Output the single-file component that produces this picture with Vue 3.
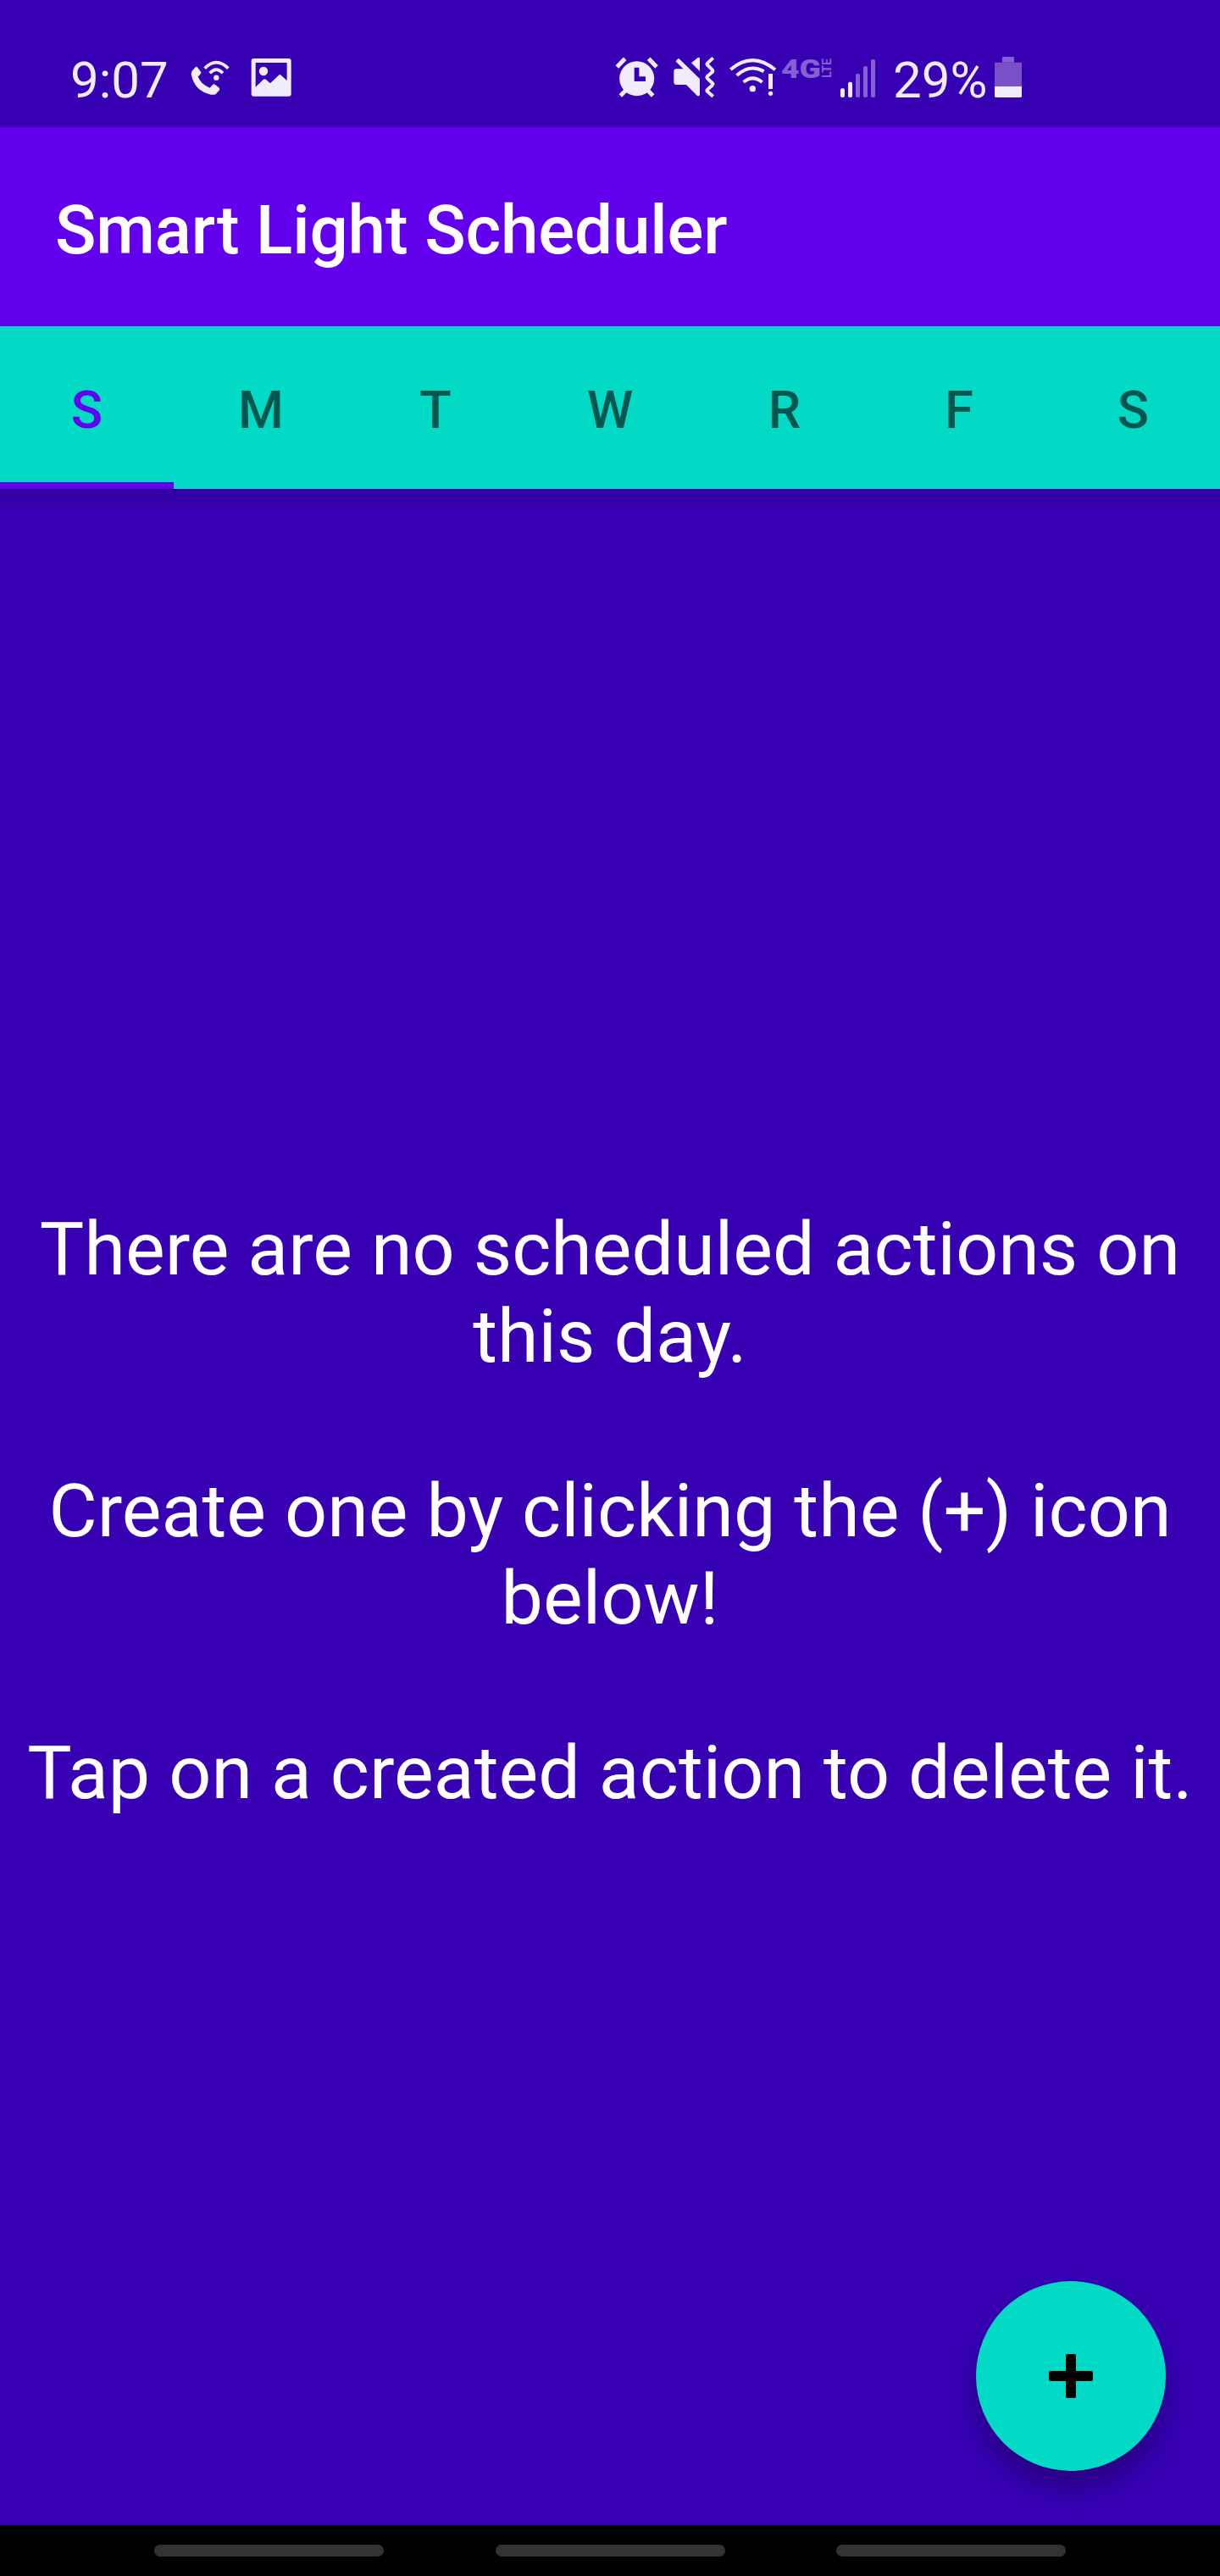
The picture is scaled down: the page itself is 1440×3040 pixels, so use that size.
<script setup>
import { ref } from 'vue'

const days = ['S', 'M', 'T', 'W', 'R', 'F', 'S']
const selected = ref(0)
</script>

<template>
  <div class="screen">
    <header class="status">
      <div class="group">
        <span class="clock">9:07</span>
        <svg class="call" width="48" height="150" viewBox="224 0 48 150">
          <g transform="translate(60 40) scale(.33333)">
            <path class="on" d="M500 131L512 118Q516 114 520 119L532 136Q534 140 521 151Q530 178 563 191L573 180Q577 176 582 180L595 190Q600 195 596 200L585 212Q580 217 566 215Q510 202 498 147Q496 137 500 131Z" />
            <path class="line" stroke-width="11" d="M545 122Q586 80 628 122M563 139Q586 114 609 139" />
            <circle class="on" cx="586" cy="155" r="9.5" />
          </g>
        </svg>
        <svg class="picture" width="48" height="150" viewBox="296 0 48 150">
          <g transform="translate(60 40) scale(.33333)">
            <path class="on" fill-rule="evenodd" d="M719 87H842Q851 87 851 96V212Q851 221 842 221H719Q710 221 710 212V96Q710 87 719 87ZM725 102H836V165L815 146Q811 142 807 146L777 175L762 162Q757 158 752 162L725 188Z" />
            <circle class="on" cx="753" cy="132" r="15.5" />
          </g>
        </svg>
      </div>
      <div class="group">
        <svg width="54" height="150" viewBox="725 0 54 150">
          <g transform="translate(700 40) scale(.33333)">
            <path class="line" stroke-width="15" d="M85 117L113 88M197 88L225 117M97 219L120 196M212 219L190 196" />
            <circle class="on" cx="155" cy="158" r="61.5" />
            <path class="cut" d="M146 119H163V151H186V168H146Z" />
          </g>
        </svg>
        <svg class="mute" width="52" height="150" viewBox="794 0 52 150">
          <g transform="translate(700 40) scale(.33333)">
            <path class="on" d="M286 133Q286 124 295 124H319L292 97L303 86L378 159V215Q376 223 369 219L330 180H295Q286 180 286 171Z" />
            <path class="on" d="M348 103L371 84Q378 81 378 88V132Z" />
            <path class="line zig" stroke-width="12" d="M425 85L405 104Q402 107 405 110L422 127Q426 131 422 135L405 150Q402 154 405 158L422 174Q426 178 422 182L405 197Q402 201 405 204L425 221" />
          </g>
        </svg>
        <svg class="wifi" width="58" height="150" viewBox="860 0 58 150">
          <g transform="translate(700 40) scale(.33333)">
            <path class="line" stroke-width="12" d="M487 126Q565 60 645 127M509 147Q556 104 605 133M533 171Q565 143 599 171" />
            <circle class="on" cx="565" cy="194" r="11" />
            <path class="on" d="M621 141H636V195H621Z" />
            <circle class="on" cx="628.500" cy="211" r="8" />
          </g>
        </svg>
        <svg class="network" width="68" height="150" viewBox="921 0 68 150">
          <text class="dim gen" x="922" y="92" textLength="47" lengthAdjust="spacingAndGlyphs">4G</text>
          <text class="dim lte" transform="translate(981 92) rotate(-90)" textLength="23" lengthAdjust="spacingAndGlyphs">LTE</text>
        </svg>
        <svg class="signal" width="43" height="150" viewBox="991 0 43 150">
          <g transform="translate(960 40) scale(.33333)">
            <rect class="on" x="96" y="193" width="15" height="32" rx="6" />
            <rect class="on" x="123" y="170" width="15" height="55" rx="6" />
            <rect class="dim" x="150" y="141" width="15" height="84" rx="6" />
            <rect class="dim" x="177" y="114" width="15" height="111" rx="6" />
            <rect class="dim" x="204" y="90" width="15" height="135" rx="6" />
          </g>
        </svg>
        <span class="percent">29%</span>
        <svg class="battery" width="32" height="150" viewBox="1174 0 32 150">
          <g transform="translate(960 40) scale(.33333)">
            <path class="dim" d="M669 101V84Q669 81 672 81H708Q711 81 711 84V101Z" />
            <path class="shell" d="M642 186V105Q642 101 646 101H734Q738 101 738 105V186Z" />
            <path class="on" d="M642 186H738V220Q738 225 733 225H647Q642 225 642 220Z" />
          </g>
        </svg>
      </div>
    </header>

    <div class="appbar"><h1>Smart Light Scheduler</h1></div>

    <nav class="tabs">
      <button
        v-for="(day, i) in days"
        :key="i"
        class="tab"
        :class="{ active: i === selected }"
        @click="selected = i"
      >{{ day }}</button>
    </nav>

    <main class="content">
      <p>There are no scheduled actions on<br>this day.</p>
      <p>Create one by clicking the (+) icon<br>below!</p>
      <p>Tap on a created action to delete it.</p>
      <button class="fab" aria-label="Add action">
        <svg width="52" height="52" viewBox="0 0 52 52">
          <rect x="20" y="0" width="12" height="52" rx="2" />
          <rect x="0" y="20" width="52" height="12" rx="2" />
        </svg>
      </button>
    </main>

    <footer class="navbar"><i></i><i></i><i></i></footer>
  </div>
</template>

<style>
body {
  margin: 0;
  background: #3700b3;
}
</style>

<style scoped>
.screen {
  width: 1440px;
  height: 3040px;
  display: flex;
  flex-direction: column;
  overflow: hidden;
  background: #3700b3;
  color: #fff;
  font-family: Roboto, sans-serif;
}
.status {
  height: 150px;
  flex: none;
  box-sizing: border-box;
  padding: 0 234px 0 83px;
  display: flex;
  justify-content: space-between;
  color: #f1ecfb;
  font-size: 60px;
  line-height: 70px;
}
.group {
  display: flex;
}
.group svg {
  display: block;
  flex: none;
  overflow: visible;
}
.clock,
.percent {
  padding-top: 60px;
  white-space: nowrap;
}
.clock {
  width: 141px;
}
.picture {
  margin-left: 24px;
}
.mute {
  margin-left: 15px;
}
.wifi {
  margin-left: 14px;
}
.network {
  margin-left: 3px;
}
.signal {
  margin-left: 2px;
}
.percent {
  width: 120px;
  margin-left: 20px;
}
.on {
  fill: #f1ecfb;
}
.dim {
  fill: #8660d2;
}
.shell {
  fill: #7a50c9;
}
.cut {
  fill: #3700b3;
}
.line {
  fill: none;
  stroke: #f1ecfb;
}
.zig {
  stroke-linejoin: round;
}
.gen {
  font-size: 32px;
  font-weight: 900;
}
.lte {
  font-size: 14.5px;
  font-weight: 700;
}
.appbar {
  height: 235px;
  flex: none;
  display: flex;
  align-items: center;
  padding-left: 65px;
  background: #6200ee;
}
h1 {
  margin: 9px 0 0;
  font-size: 80px;
  font-weight: 500;
  letter-spacing: -0.15px;
  line-height: 94px;
}
.tabs {
  height: 192px;
  flex: none;
  display: grid;
  grid-template-columns: 205px repeat(5, 206px) 205px;
  background: #03dac5;
}
.tab {
  box-sizing: border-box;
  padding: 13px 0 0;
  border: 0;
  border-bottom: 8px solid transparent;
  background: none;
  color: #015750;
  font: 500 61.6px/72px Roboto, sans-serif;
}
.tab.active {
  color: #6200ee;
  border-bottom-color: #6200ee;
}
.content {
  position: relative;
  flex: 1;
  display: flex;
  flex-direction: column;
  justify-content: center;
  gap: 103px;
  padding-top: 8px;
  background: linear-gradient(#3300a1, #3700b3 28px);
}
p {
  margin: 0;
  text-align: center;
  font-size: 88px;
  letter-spacing: 0.06px;
  line-height: 103px;
  white-space: nowrap;
}
.fab {
  position: absolute;
  right: 64px;
  bottom: 64px;
  width: 224px;
  height: 224px;
  padding: 0;
  border: 0;
  border-radius: 50%;
  display: flex;
  align-items: center;
  justify-content: center;
  background: #03dac5;
  box-shadow: 0 20px 36px -4px rgba(0, 0, 0, 0.32);
}
.navbar {
  height: 60px;
  flex: none;
  display: flex;
  align-items: center;
  justify-content: center;
  gap: 131.5px;
  background: #000;
}
.navbar i {
  width: 271px;
  height: 14px;
  border-radius: 7px;
  background: #333;
}
</style>
